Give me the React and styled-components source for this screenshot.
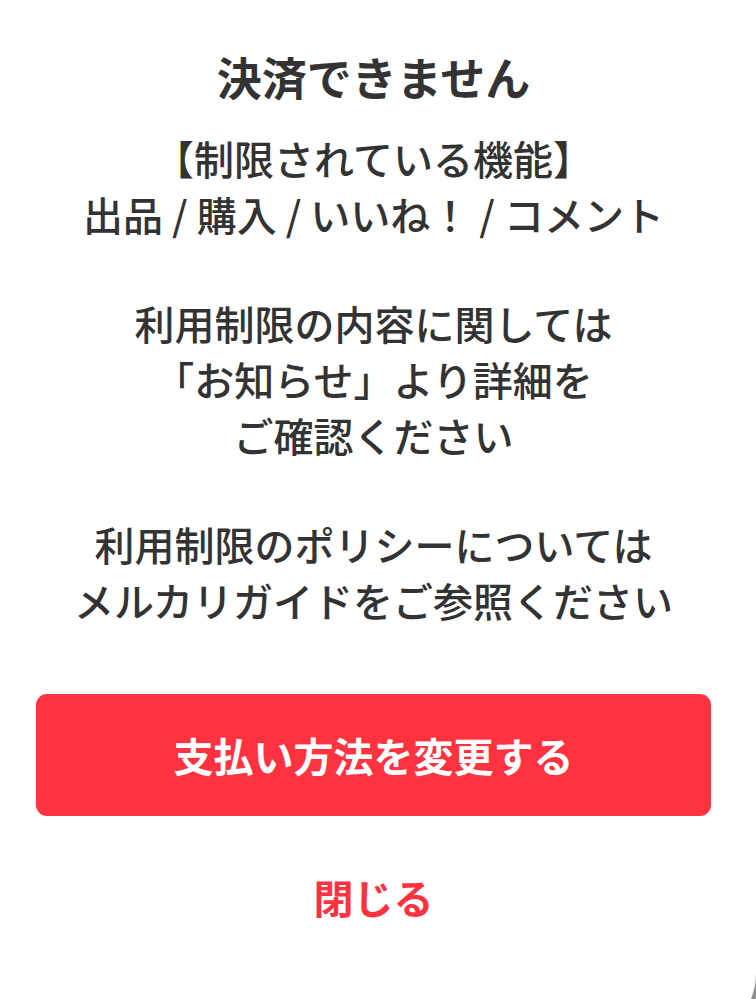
import React from "react";
import styled, { createGlobalStyle } from "styled-components";

const GlobalStyle = createGlobalStyle`
    html, body {
        margin: 0;
        padding: 0;
        background: #8f8f8f;
        overflow: hidden;
    }
    body {
        font-family: "Noto Sans CJK JP", "Noto Sans", sans-serif;
        color: #333333;
    }
`;

// the sheet runs a little past the bottom edge; only the start of its corner shows
const Dialog = styled.div`
    width: 756px;
    height: 1043px;
    box-sizing: border-box;
    padding: 46px 45px 0 36px;
    display: flex;
    flex-direction: column;
    align-items: stretch;
    background: #ffffff;
    border-bottom-right-radius: 70px;
    overflow: hidden;
`;

const Title = styled.h1`
    margin: 0;
    font-size: 45px;
    line-height: 62px;
    font-weight: 700;
    text-align: center;
    color: #333333;
`;

const Message = styled.div`
    margin-top: 22px;
    display: flex;
    flex-direction: column;
    gap: 53px;
`;

const Paragraph = styled.p`
    margin: 0;
    font-size: 40px;
    line-height: 56px;
    font-weight: 500;
    text-align: center;
    color: #333333;
    white-space: nowrap;
`;

const PrimaryButton = styled.button`
    margin-top: 66px;
    height: 122px;
    width: 100%;
    border: none;
    border-radius: 11px;
    background: #ff333f;
    color: #ffffff;
    font-family: inherit;
    font-size: 40px;
    font-weight: 700;
    cursor: pointer;
`;

const TextButton = styled.button`
    margin: 53px auto 0;
    border: none;
    background: none;
    padding: 0;
    color: #ff333f;
    font-family: inherit;
    font-size: 40px;
    line-height: 56px;
    font-weight: 700;
    cursor: pointer;
`;

const paragraphs = [
    ["【制限されている機能】", "出品 / 購入 / いいね！ / コメント"],
    ["利用制限の内容に関しては", "「お知らせ」より詳細を", "ご確認ください"],
    ["利用制限のポリシーについては", "メルカリガイドをご参照ください"],
];

export default function App() {
    return (
        <>
            <GlobalStyle />
            <Dialog>
                <Title>決済できません</Title>
                <Message>
                    {paragraphs.map((lines, i) => (
                        <Paragraph key={i}>
                            {lines.map((line, j) => (
                                <React.Fragment key={j}>
                                    {line}
                                    {j < lines.length - 1 && <br />}
                                </React.Fragment>
                            ))}
                        </Paragraph>
                    ))}
                </Message>
                <PrimaryButton>支払い方法を変更する</PrimaryButton>
                <TextButton>閉じる</TextButton>
            </Dialog>
        </>
    );
}
